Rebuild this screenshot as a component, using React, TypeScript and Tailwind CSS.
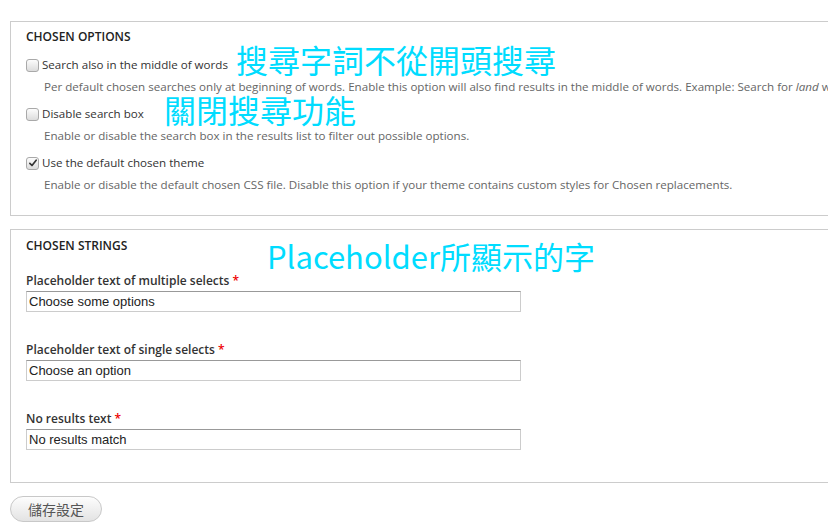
import React from "react";

const sans = { fontFamily: '"Open Sans", "Noto Sans", "Noto Sans CJK TC", sans-serif' };

function Checkbox({ checked }: { checked?: boolean }) {
  return (
    <span className="relative inline-flex h-[13px] w-[13px] shrink-0 items-center justify-center rounded-[3px] border border-[#a9a9a9] bg-gradient-to-b from-[#fcfcfc] to-[#dcdcdc]">
      {checked && (
        <svg viewBox="0 0 12 12" className="h-[10px] w-[10px]">
          <path d="M2.2 6.4 L4.8 9 L9.8 2.6" fill="none" stroke="#333" strokeWidth="2" strokeLinecap="round" strokeLinejoin="round" />
        </svg>
      )}
    </span>
  );
}

function Option({ label, checked, children, first }: { label: string; checked?: boolean; children: React.ReactNode; first?: boolean }) {
  return (
    <div className={first ? "mt-[11px]" : "mt-[10px]"}>
      <div className="flex h-[18px] items-center gap-[3px] text-[11.6px] text-[#333]">
        <Checkbox checked={checked} />
        <span className="leading-[18px]">{label}</span>
      </div>
      <div className="mt-[5px] whitespace-nowrap pl-[18px] text-[11.6px] leading-[16px] text-[#666]">{children}</div>
    </div>
  );
}

function Field({ label, value, first }: { label: string; value: string; first?: boolean }) {
  return (
    <div className={first ? "mt-[19px]" : "mt-[30px]"}>
      <div className="text-[12px] font-semibold leading-[16px] text-[#333]">
        {label} <span className="text-[#e00]">*</span>
      </div>
      <div
        className="mt-[2px] flex h-[21px] w-[495px] items-center border border-[#ccc] border-t-[#999] pl-[2px] text-[13px] text-[#222]"
        style={{ fontFamily: '"Liberation Sans", Arial, sans-serif' }}
      >
        {value}
      </div>
    </div>
  );
}

export default function App() {
  return (
    <div className="relative h-[532px] w-[828px] overflow-hidden bg-white" style={sans}>
      <div className="pt-[21px] pl-[10px]">
        <div className="w-[1000px] border border-[#ccc] pl-[15px] pt-[7px] pb-[22px]">
          <div className="text-[12px] font-semibold leading-[16px] text-[#222]">CHOSEN OPTIONS</div>
          <Option first label="Search also in the middle of words">
            Per default chosen searches only at beginning of words. Enable this option will also find results in the middle of words. Example: Search for <i>land</i> will also find results like <i>Finland</i>.
          </Option>
          <Option label="Disable search box">
            Enable or disable the search box in the results list to filter out possible options.
          </Option>
          <Option checked label="Use the default chosen theme">
            Enable or disable the default chosen CSS file. Disable this option if your theme contains custom styles for Chosen replacements.
          </Option>
        </div>

        <div className="mt-[13px] w-[1000px] border border-[#ccc] pl-[15px] pt-[8px] pb-[32px]">
          <div className="text-[12px] font-semibold leading-[16px] text-[#222]">CHOSEN STRINGS</div>
          <Field first label="Placeholder text of multiple selects" value="Choose some options" />
          <Field label="Placeholder text of single selects" value="Choose an option" />
          <Field label="No results text" value="No results match" />
        </div>

        <button
          className="mt-[13px] flex h-[26px] w-[92px] items-center justify-center rounded-full border border-[#c8c8c8] bg-gradient-to-b from-[#fdfdfd] to-[#e3e3e3] text-[14px] text-[#555]"
          style={{ fontFamily: '"Noto Sans CJK TC", sans-serif' }}
        >
          儲存設定
        </button>
      </div>

      <div
        className="absolute left-[236px] top-[43px] text-[32px] leading-none text-[#00dcff]"
        style={{ fontFamily: '"Noto Sans CJK TC", sans-serif' }}
      >
        搜尋字詞不從開頭搜尋
      </div>
      <div
        className="absolute left-[164px] top-[93px] text-[32px] leading-none text-[#00dcff]"
        style={{ fontFamily: '"Noto Sans CJK TC", sans-serif' }}
      >
        關閉搜尋功能
      </div>
      <div
        className="absolute left-[267px] top-[240px] text-[31px] leading-none text-[#00dcff]"
        style={{ fontFamily: '"Noto Sans CJK TC", sans-serif' }}
      >
        Placeholder所顯示的字
      </div>
    </div>
  );
}
